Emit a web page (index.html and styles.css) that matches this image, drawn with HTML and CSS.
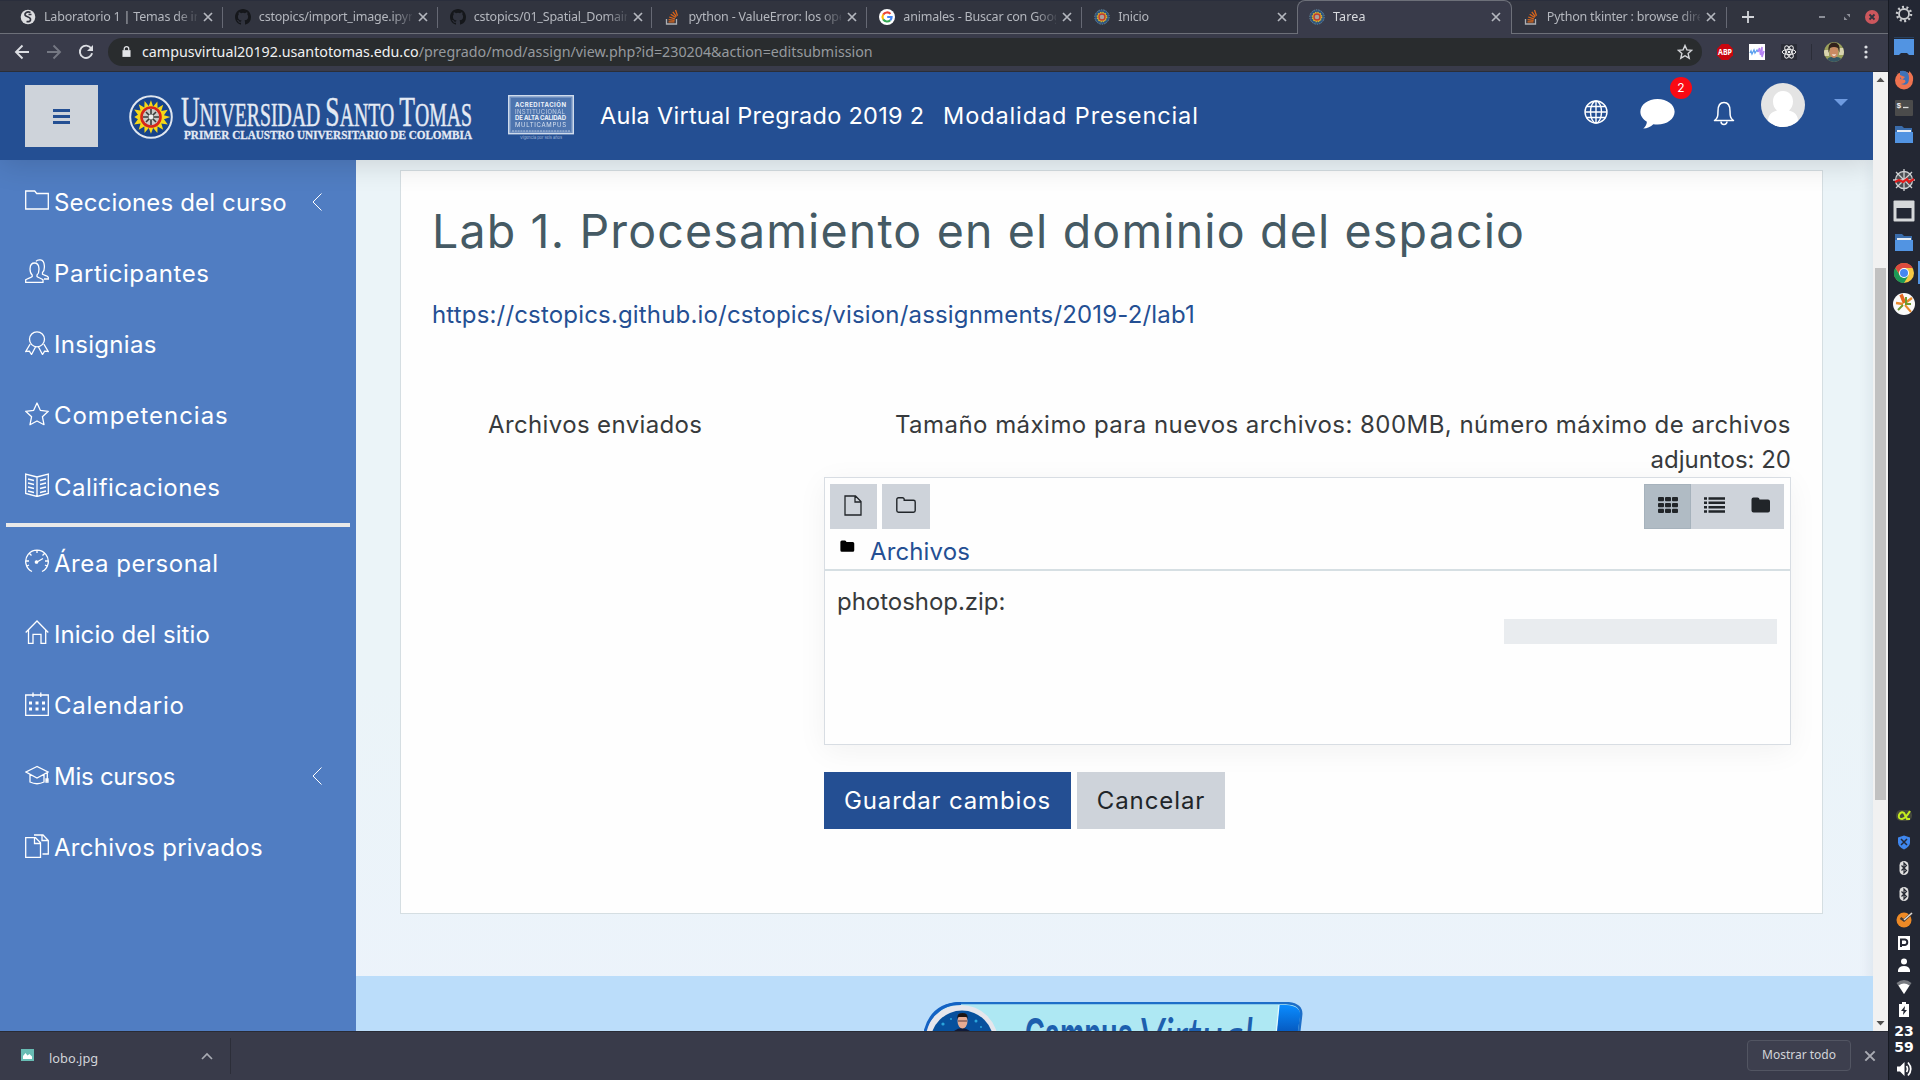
FILE: index.html
```html
<!DOCTYPE html>
<html lang="es">
<head>
<meta charset="utf-8">
<title>Tarea</title>
<link rel="stylesheet" href="styles.css">
</head>
<body>
<svg class="defs" width="0" height="0">
  <defs>
    <symbol id="x" viewBox="0 0 12 12"><path d="M2 2l8 8M10 2l-8 8" fill="none" stroke="currentColor" stroke-width="1.7"/></symbol>
    <symbol id="github" viewBox="0 0 16 16"><path fill="#15171b" d="M8 0C3.58 0 0 3.58 0 8c0 3.54 2.29 6.53 5.47 7.59.4.07.55-.17.55-.38v-1.49c-2.01.37-2.53-.49-2.69-.94-.09-.23-.48-.94-.82-1.13-.28-.15-.68-.52-.01-.53.63-.01 1.08.58 1.23.82.72 1.21 1.87.87 2.33.66.07-.52.28-.87.51-1.07-1.78-.2-3.64-.89-3.64-3.95 0-.87.31-1.59.82-2.15-.08-.2-.36-1.02.08-2.12 0 0 .67-.21 2.2.82a7.4 7.4 0 014 0c1.53-1.04 2.2-.82 2.2-.82.44 1.1.16 1.92.08 2.12.51.56.82 1.27.82 2.15 0 3.07-1.87 3.75-3.65 3.95.29.25.54.73.54 1.48v2.2c0 .21.15.46.55.38A8 8 0 0016 8c0-4.42-3.58-8-8-8z"/></symbol>
    <symbol id="stack" viewBox="0 0 16 16"><path d="M2.5 10v5h10v-5" fill="none" stroke="#aeb0b4" stroke-width="1.3"/><path d="M4.5 12.9h6M4.6 10.6l6 .7M5.2 8l5.7 1.8M6.7 5.2l5 3.3M8.8 2.9l3.6 4.8M11.5 1l2 5.7" fill="none" stroke="#d9661c" stroke-width="1.3"/></symbol>
    <symbol id="sun" viewBox="0 0 44 44"><circle cx="22" cy="22" r="20.8" fill="#17448b" stroke="#dfe6ef" stroke-width="2"/><path fill="#f5d818" d="M22 3l2.500 7 4.800-5.600.2 7.400 6.400-3.700-2.100 7.100 7.300-1.300-4.300 6.100L44 22l-7.200 2.500 4.300 6.100-7.300-1.300 2.100 7.100-6.400-3.700-.2 7.400-4.800-5.600L22 41l-2.500-6.500-4.800 5.600-.2-7.400-6.400 3.700 2.100-7.100-7.300 1.300 4.300-6.100L3 22l4.200-2.500-4.300-6.100 7.300 1.300-2.100-7.100 6.400 3.700.2-7.400 4.800 5.600z" transform="translate(2.600 2.600) scale(.88)"/><circle cx="22" cy="22" r="9.500" fill="#c9c9c6" stroke="#d5261c" stroke-width="2.600"/><path d="M22 14v16M14 22h16M17 17l10 10M27 17L17 27" stroke="#3a3a3a" stroke-width="1.6"/><circle cx="22" cy="22" r="2.4" fill="#eee"/></symbol>
    <symbol id="sunsmall" viewBox="0 0 16 16"><circle cx="8" cy="8" r="7.2" fill="#2c5480" stroke="#668ba2" stroke-width="1" stroke-dasharray="1.5 1"/><circle cx="8" cy="8" r="4.600" fill="#d9b52d" stroke="#d9b52d" stroke-width="1.500" stroke-dasharray="1.200 1.200"/><circle cx="8" cy="8" r="3" fill="#a9a09b" stroke="#c23b2c" stroke-width="1.4"/></symbol>
    <symbol id="bt" viewBox="0 0 20 20"><rect x="5.5" y="3" width="9" height="14" rx="4.5" fill="#dedede"/><path d="M7.5 7.5l5 5-2.5 2.5V5l2.5 2.500-5 5" fill="none" stroke="#252933" stroke-width="1.2"/></symbol>
    <symbol id="pfolder" viewBox="0 0 24 24"><path d="M3 3h7l2 2h8v5H3z" fill="#3a6cab"/><path d="M5 7h14v3H5z" fill="#e8eef5"/><path d="M3 9h18v11H3z" fill="#5294e2"/></symbol>
    <symbol id="folderfill" viewBox="0 0 20 16"><path d="M.5 2.5a2 2 0 012-2h4a2 2 0 012 2h8.500a2 2 0 012 2V13.500a2 2 0 01-2 2h-14.500a2 2 0 01-2-2z" fill="currentColor"/></symbol>
    <symbol id="chev" viewBox="0 0 10 18"><path d="M9.500 .5L1 9l8.500 8.500" fill="none" stroke="#fff" stroke-width="1"/></symbol>
  </defs>
</svg>

<div class="desktop">
  <div class="browser">
    <div class="tabs">
      <div class="tab"><svg viewBox="0 0 16 16"><circle cx="8" cy="8" r="7.300" fill="#dcdde0"/><path d="M10.500 3.500C7 2 4.500 4 5 6s5 1.500 5.500 4-2 3-4 2.500M8.500 5.500h3" fill="none" stroke="#31333e" stroke-width="1.700"/></svg><span>Laboratorio 1 | Temas de in</span><svg class="close"><use href="#x"/></svg></div>
      <div class="tab"><svg><use href="#github"/></svg><span>cstopics/import_image.ipyn</span><svg class="close"><use href="#x"/></svg></div>
      <div class="tab"><svg><use href="#github"/></svg><span>cstopics/01_Spatial_Domain</span><svg class="close"><use href="#x"/></svg></div>
      <div class="tab"><svg><use href="#stack"/></svg><span>python - ValueError: los ope</span><svg class="close"><use href="#x"/></svg></div>
      <div class="tab"><svg viewBox="0 0 16 16"><circle cx="8" cy="8" r="8" fill="#fff"/><g fill="none" stroke-width="2.100"><path d="M11.500 4.900A4.600 4.600 0 004.200 5.600" stroke="#ea4335"/><path d="M4.200 5.600a4.600 4.600 0 000 4.800" stroke="#fbbc05"/><path d="M4.200 10.400a4.600 4.600 0 007.100.8" stroke="#34a853"/><path d="M11.300 11.200A4.600 4.600 0 0012.600 8H8.200" stroke="#4285f4"/></g></svg><span>animales - Buscar con Goog</span><svg class="close"><use href="#x"/></svg></div>
      <div class="tab nosep"><svg><use href="#sunsmall"/></svg><span>Inicio</span><svg class="close"><use href="#x"/></svg></div>
      <div class="tab active"><svg><use href="#sunsmall"/></svg><span>Tarea</span><svg class="close"><use href="#x"/></svg></div>
      <div class="tab last"><svg><use href="#stack"/></svg><span>Python tkinter : browse dire</span><svg class="close"><use href="#x"/></svg></div>
      <svg class="newtab" viewBox="0 0 14 14"><path d="M7 1v12M1 7h12" stroke="#d3d5da" stroke-width="1.800"/></svg>
      <div class="winctl">
        <svg viewBox="0 0 14 14"><path d="M4 7h6" stroke="#8c8f98" stroke-width="2"/></svg>
        <svg viewBox="0 0 14 14"><path d="M6.500 4H10v3.500zM7.500 10H4V6.500z" fill="#8c8f98"/></svg>
        <svg viewBox="0 0 14 14"><circle cx="7" cy="7" r="7" fill="#cc575d"/><path d="M4.500 4.500l5 5M9.500 4.500l-5 5" stroke="#2f343f" stroke-width="1.800"/></svg>
      </div>
    </div>

    <div class="toolbar">
      <svg class="nav" viewBox="0 0 16 16"><path d="M15 8H2M8.500 1.500L2 8l6.500 6.500" fill="none" stroke="#dcdee3" stroke-width="1.900"/></svg>
      <svg class="nav" viewBox="0 0 16 16"><path d="M1 8h13M7.500 1.500L14 8l-6.500 6.500" fill="none" stroke="#757883" stroke-width="1.900"/></svg>
      <svg class="nav" viewBox="0 0 16 16"><path d="M13.200 4.300A6.200 6.200 0 1014.100 9.300" fill="none" stroke="#dcdee3" stroke-width="1.900"/><path d="M15 1v6H9z" fill="#dcdee3"/></svg>
      <div class="omnibox">
        <svg class="lock" viewBox="0 0 10 13"><path d="M1 5h8.500v7.500H.5V5z" fill="#e3e5e8"/><path d="M2.500 5.500V3.500a2.500 2.500 0 015 0v2" fill="none" stroke="#e3e5e8" stroke-width="1.400"/></svg>
        <div class="url"><b>campusvirtual20192.usantotomas.edu.co</b>/pregrado/mod/assign/view.php?id=230204&amp;action=editsubmission</div>
        <svg class="star" viewBox="0 0 16 16"><path d="M8 1.500l1.900 4.400 4.800.4-3.600 3.200 1.100 4.700L8 11.700l-4.200 2.500 1.100-4.700L1.300 6.300l4.800-.4z" fill="none" stroke="#d3d5d8" stroke-width="1.400"/></svg>
      </div>
      <div class="exts">
        <svg viewBox="0 0 16 16"><path d="M4.700 0h6.600L16 4.700v6.600L11.300 16H4.700L0 11.300V4.700z" fill="#c8060e"/><text x="8" y="11" text-anchor="middle" textLength="14" lengthAdjust="spacingAndGlyphs" class="abp">ABP</text></svg>
        <svg viewBox="0 0 16 16"><path fill="#fff" d="M0 0h16v16H0z"/><path d="M1 9l1-2 1 3 2-4 1 3 2-3 1 2" fill="none" stroke="#5aa0ef" stroke-width="1.300"/><path d="M9 8l1.500-4 1 7 1.500-8v10l2-6" fill="none" stroke="#b583f3" stroke-width="1.500"/></svg>
        <svg viewBox="0 0 16 16"><path fill="#2b2d37" d="M0 0h16v16H0z"/><g fill="none" stroke="#eee" stroke-width="1"><ellipse cx="8" cy="8" rx="6.800" ry="2.600"/><ellipse cx="8" cy="8" rx="6.800" ry="2.600" transform="rotate(60 8 8)"/><ellipse cx="8" cy="8" rx="6.800" ry="2.600" transform="rotate(120 8 8)"/></g><circle cx="8" cy="8" r="1.300" fill="#eee"/></svg>
        <i></i>
        <svg class="me" viewBox="0 0 20 20"><clipPath id="mc"><circle cx="10" cy="10" r="10"/></clipPath><g clip-path="url(#mc)"><path fill="#9aa05c" d="M0 0h20v20H0z"/><path d="M0 8h5v6H0zM15 6h5v7h-5z" fill="#d9d4b0"/><path d="M2 20q1-5 6-5h4q6 0 6 5z" fill="#355664"/><ellipse cx="10" cy="10" rx="4.300" ry="6" fill="#c98a63"/><path d="M4.500 11Q3 .5 10 .5T15.500 11l-1.500-5q-4-2-8 0z" fill="#33221b"/><path d="M7.700 12.500h4.600q-2.300 2.400-4.600 0z" fill="#fff"/></g></svg>
        <svg class="dots" viewBox="0 0 16 16"><g fill="#dcdee3"><circle cx="8" cy="3" r="1.600"/><circle cx="8" cy="8" r="1.600"/><circle cx="8" cy="13" r="1.600"/></g></svg>
      </div>
    </div>

    <div class="viewport">
      <div class="page">
        <header class="top">
          <button class="burger"><i></i><i></i><i></i></button>
          <svg class="logo" viewBox="0 0 344 46">
            <use href="#sun" x="0" y="0" width="44" height="44"/>
            <text class="brand" x="52" y="31" textLength="291" lengthAdjust="spacingAndGlyphs"><tspan class="cap">U</tspan>NIVERSIDAD <tspan class="cap">S</tspan>ANTO <tspan class="cap">T</tspan>OMAS</text>
            <text class="motto" x="55" y="43.500" textLength="288" lengthAdjust="spacingAndGlyphs">PRIMER CLAUSTRO UNIVERSITARIO DE COLOMBIA</text>
          </svg>
          <svg class="accred" viewBox="0 0 66 46">
            <rect x=".7" y=".7" width="64.600" height="38" fill="#6f8fc0" stroke="#cfdbec" stroke-width="1.400"/><rect x="3" y="3" width="60" height="33.500" fill="#4d74ae"/>
            <text x="7" y="12" textLength="51" font-weight="700">ACREDITACIÓN</text><text x="7" y="18.500" textLength="50" opacity=".7">INSTITUCIONAL</text><text x="7" y="25" textLength="51" font-weight="700">DE ALTA CALIDAD</text><text x="7" y="32" textLength="51" opacity=".85">MULTICAMPUS</text>
            <path d="M4 36h58" stroke="#b9c9e2" stroke-dasharray="2 .8"/><text class="tiny" x="12" y="43.500" textLength="42">Vigencia por seis años</text>
          </svg>
          <div class="site">Aula Virtual Pregrado 2019 2 &nbsp;<span>Modalidad Presencial</span></div>
          <div class="tools">
            <svg class="globe" viewBox="0 0 24 24"><g fill="none" stroke="#fff" stroke-width="1.400"><circle cx="12" cy="12" r="11"/><ellipse cx="12" cy="12" rx="5.500" ry="11"/><path d="M12 1v22M1 12h22M2.500 6.500h19M2.500 17.500h19"/></g></svg>
            <div class="chat"><svg viewBox="0 0 36 31"><path d="M18 0c9.800 0 17.700 6 17.700 13.500S27.800 27 18 27c-1.500 0-3-.1-4.300-.4C11 29.500 7.500 31 3.300 31c2.500-2 3.700-4.500 3.700-7C2.800 21.500.3 17.700.3 13.500.3 6 8.200 0 18 0z" fill="#fff" transform="scale(1 .98)"/></svg><span>2</span></div>
            <svg class="bell" viewBox="0 0 22 25"><path d="M1.500 19.500h19c-3-2-3.500-4-3.500-9.500 0-5-2-8.500-6-8.500S5 5 5 10c0 5.500-.5 7.500-3.500 9.500z" fill="none" stroke="#fff" stroke-width="1.500" stroke-linejoin="round"/><path d="M8 20.500a3 3 0 006 0" fill="none" stroke="#fff" stroke-width="1.500"/></svg>
            <svg class="avatar" viewBox="0 0 44 44"><clipPath id="ac"><circle cx="22" cy="22" r="22"/></clipPath><g clip-path="url(#ac)"><path fill="#e4e4e4" d="M0 0h44v44H0z"/><path d="M22 8c6 0 10 4.500 10 10.500 0 4-1.500 7-4 9 6 1.500 9 5 9 10.500V44H7v-6c0-5.500 3-9 9-10.500-2.500-2-4-5-4-9C12 12.500 16 8 22 8z" fill="#fff"/></g></svg>
            <svg class="caret" viewBox="0 0 14 7"><path d="M0 0h14L7 7z" fill="#6f9be0"/></svg>
          </div>
        </header>
        <div class="below">
          <nav class="side">
            <a class="n1"><svg viewBox="0 0 24 24"><path d="M.7 21V3h9l2 2.500h11.600V21z"/></svg>Secciones del curso<svg class="chev"><use href="#chev"/></svg></a>
            <a class="n2"><svg viewBox="0 0 24 24"><path d="M.7 23.300v-2.500c2.500-1.600 5-2 6.500-3.300V16C4.500 14 3.500 4 9.500 4S14.500 14 12 16v1.500c1.500 1.300 4 1.700 6 3.300v2.500zM11 2.300C12 1 14 .7 15.500.9c5 .6 4.600 10.600 2 12.600v1.800c2 1.200 5 1.500 5.800 3V20H19"/></svg>Participantes</a>
            <a class="n3"><svg viewBox="0 0 24 24"><circle cx="12" cy="8.300" r="7.500"/><path d="M5.200 13L.8 20.500l3.600-.3L6.500 23.500l4-7.500M18.800 13l4.400 7.500-3.600-.3-2.100 3.300-4-7.500"/></svg>Insignias</a>
            <a class="n4"><svg viewBox="0 0 24 24"><path d="M12 1l3.300 7.300 8 1-5.900 5.400 1.600 8L12 19l-7 3.700 1.600-8L.7 9.300l8-1z" stroke-linejoin="round"/></svg>Competencias</a>
            <a class="n5"><svg viewBox="0 0 24 24"><path d="M12 4L.7 1v19.500L12 23.500l11.300-3V1zv19.500M3 6l6 1.500M3 10l6 1.500M3 14l6 1.500M3 18l6 1.500M21 6l-6 1.500M21 10l-6 1.500M21 14l-6 1.500M21 18l-6 1.500"/></svg>Calificaciones</a>
            <hr>
            <a class="n6"><svg viewBox="0 0 24 24"><path d="M7 22.500a11.300 11.300 0 1110 0M12 1v3M1 12h3M20 12h3M4.500 4.500l2 2M19.500 4.500l-2 2M2 17l2-1M22 17l-2-1M12 13l6-3.500" /><circle cx="11.500" cy="13" r="1.200" fill="#fff"/></svg>Área personal</a>
            <a class="n7"><svg viewBox="0 0 24 24"><path d="M.7 12.500L12 1l11.300 11.500M3.500 10v13.300H8v-9h8v9h4.700V10"/></svg>Inicio del sitio</a>
            <a class="n8"><svg viewBox="0 0 24 24"><path d="M.7 3h22.600v20.300H.7zM8 .5V5M15.800.5V5"/><path d="M4 11h3M10.500 11h3M17 11h3M4 17h3M10.500 17h3M17 17h3" stroke-width="2.800"/></svg>Calendario</a>
            <a class="n9"><svg viewBox="0 0 24 24"><path d="M12 3.500L1 9l11 6 11-6zM5 11.500V19q7 3.500 14 0v-7.500M22.300 9.500V18M21 16v3h2v-3z"/></svg>Mis cursos<svg class="chev"><use href="#chev"/></svg></a>
            <a class="n10"><svg viewBox="0 0 24 24"><path d="M.7 3.700h9.800l5 5v14.600H.7zM9.500 4v5.500H15M9 1h9l5.300 5.500V20H17.500M17 1v5.500h6"/></svg>Archivos privados</a>
          </nav>
          <main>
            <section class="card">
              <h1>Lab 1. Procesamiento en el dominio del espacio</h1>
              <a class="link">https://cstopics.github.io/cstopics/vision/assignments/2019-2/lab1</a>
              <div class="row">
                <label>Archivos enviados</label>
                <div class="field">
                  <p class="limit"><span class="l1">Tamaño máximo para nuevos archivos: 800MB, número máximo de archivos</span><br><span class="l2">adjuntos: 20</span></p>
                  <div class="fm">
                    <div class="fmtop">
                      <div class="fmbar">
                        <button><svg width="18" height="21" viewBox="0 0 18 21"><path d="M1 1h10.500L17 6.500V20H1zM11 1v6h6" fill="none" stroke="#212529" stroke-width="1.300"/></svg></button>
                        <button class="mk"><svg width="20" height="16" viewBox="0 0 20 16"><path d="M.8 2.500A1.700 1.700 0 012.500.8h4a1.700 1.700 0 011.700 1.700v.7h9.300a1.700 1.700 0 011.700 1.700v8.600a1.700 1.700 0 01-1.700 1.700h-15a1.700 1.700 0 01-1.700-1.700z" fill="none" stroke="#212529" stroke-width="1.400"/></svg></button>
                        <div class="views">
                          <button class="on"><svg width="20" height="16" viewBox="0 0 20 16"><g fill="#212529"><rect width="6" height="4.300" rx="1"/><rect x="7" width="6" height="4.300" rx="1"/><rect x="14" width="6" height="4.300" rx="1"/><rect y="5.900" width="6" height="4.300" rx="1"/><rect x="7" y="5.900" width="6" height="4.300" rx="1"/><rect x="14" y="5.900" width="6" height="4.300" rx="1"/><rect y="11.700" width="6" height="4.300" rx="1"/><rect x="7" y="11.700" width="6" height="4.300" rx="1"/><rect x="14" y="11.700" width="6" height="4.300" rx="1"/></g></svg></button>
                          <button><svg width="21" height="16" viewBox="0 0 21 16"><path d="M0 1.500h3M0 5.800h3M0 10.200h3M0 14.500h3M4.500 1.500H21M4.500 5.800H21M4.500 10.200H21M4.500 14.500H21" stroke="#212529" stroke-width="2.600"/></svg></button>
                          <button><svg width="20" height="16" color="#212529"><use href="#folderfill"/></svg></button>
                        </div>
                      </div>
                      <div class="path"><svg width="15" height="12"><use href="#folderfill"/></svg><a>Archivos</a></div>
                    </div>
                    <div class="fmbody"><span class="fname">photoshop.zip:</span><div class="progress"></div></div>
                  </div>
                  <div class="actions"><button class="save">Guardar cambios</button><button class="cancel">Cancelar</button></div>
                </div>
              </div>
            </section>
            <footer>
              <svg width="380" height="29" viewBox="0 0 380 29">
                <defs><linearGradient id="bl" x2="0" y2="1"><stop offset="0" stop-color="#0a8cff"/><stop offset="1" stop-color="#0550b4"/></linearGradient></defs>
                <path d="M1 40Q6 1 38 1H362Q379 2 377 14L374 40z" fill="#aee8f3" stroke="#1d6ec8" stroke-width="2.500"/>
                <path d="M355 3h7q16 1 14 12l-3 20h-21z" fill="url(#bl)"/><path d="M355 3l-3 30" stroke="#e6fbff" stroke-width="1.200"/>
                <circle cx="37" cy="40" r="37" fill="#e6e6ec"/><path d="M.5 32Q7 1.500 37 1.500" fill="none" stroke="#1462c4" stroke-width="3"/><circle cx="38" cy="40" r="31.500" fill="#07509d"/>
                <g fill="#2aa5dc"><circle cx="19" cy="22" r="1.600"/><circle cx="52" cy="19" r="1.500"/><circle cx="57" cy="25" r="1"/><circle cx="27" cy="17" r="1"/></g>
                <path d="M30 29q8-6 16 0z" fill="#101b39"/><ellipse cx="38.500" cy="19" rx="5" ry="7.500" fill="#e6ab93"/><path d="M33.500 17q-1-6 5-6t5 6l-1-2h-8z" fill="#1c1515"/><path d="M34 19h9" stroke="#5a3b3a"/>
                <text class="campus" x="101" y="48" textLength="108" lengthAdjust="spacingAndGlyphs">Campus</text>
                <text class="virtual" x="215" y="51" textLength="114" lengthAdjust="spacingAndGlyphs">Virtual</text>
              </svg>
            </footer>
          </main>
        </div>
      </div>
      <div class="scroll"><svg viewBox="0 0 15 15"><path d="M3.500 10h8l-4-4.500z" fill="#505050"/></svg><i></i><svg viewBox="0 0 15 15"><path d="M3.500 5h8l-4 4.500z" fill="#505050"/></svg></div>
    </div>

    <div class="shelf">
      <svg class="pic" viewBox="0 0 13 12"><path fill="#68bcb4" d="M0 0h13v12H0z"/><path d="M2 10V7l2.500-3 2 2.500L8.500 5 11 7.500V10z" fill="#fff"/></svg>
      <span class="file">lobo.jpg</span>
      <svg class="up" viewBox="0 0 12 8"><path d="M1 7l5-5 5 5" fill="none" stroke="#a9abb3" stroke-width="1.700"/></svg>
      <i></i>
      <button>Mostrar todo</button>
      <svg class="shx"><use href="#x"/></svg>
    </div>
  </div>

  <aside class="panel">
    <svg style="margin-top:2px" viewBox="0 0 24 24"><circle cx="12" cy="12" r="5" fill="none" stroke="#c9cbce" stroke-width="1.800"/><circle cx="12" cy="12" r="7" fill="none" stroke="#c9cbce" stroke-width="2.500" stroke-dasharray="2 2.400"/></svg>
    <svg style="margin-top:9px" viewBox="0 0 24 24"><path d="M2 4h20v16h-5l-2-2H9l-2 2H2z" fill="#5294e2"/><path d="M2 2.500h20" stroke="#27405f"/></svg>
    <svg style="margin-top:9px" viewBox="0 0 24 24"><circle cx="12" cy="12.500" r="9" fill="#ee7350"/><path d="M8 3q9-2 9 7t-8 6q6-1 4-4l-5-1z" fill="#3f72b8"/><path d="M5 4l3 3 5 2-3 3z" fill="#ee7350"/><path d="M17 3q5 4 4 10l-4-2z" fill="#ee7350"/></svg>
    <svg style="margin-top:4px" viewBox="0 0 24 24"><rect x="3" y="4" width="18" height="16" rx="1" fill="#4b4b4b"/><text x="4.500" y="11.500" class="prompt">$</text><path d="M11 11.500h5.500" stroke="#ddd" stroke-width="1.300"/></svg>
    <svg style="margin-top:3px"><use href="#pfolder"/></svg>
    <svg style="margin-top:21px" viewBox="0 0 24 24"><circle cx="12" cy="12" r="8" fill="#4a4d52"/><g fill="none" stroke="#ced0d2" stroke-width="1.300"><circle cx="12" cy="12" r="8.500"/><path d="M12 1v22M1 12h22M4 4l16 16M20 4L4 20"/></g><path d="M3 14l4-2 4 2 4-3 2 3 5-3" fill="none" stroke="#e01b1b" stroke-width="2.200"/></svg>
    <svg style="margin-top:7px" viewBox="0 0 24 24"><rect x="1.500" y="1.500" width="21" height="21" rx="1" fill="#d6d8da"/><rect x="4.500" y="9" width="15" height="10.500" fill="#232734"/></svg>
    <svg style="margin-top:8px"><use href="#pfolder"/></svg>
    <svg style="margin-top:6px" viewBox="0 0 24 24"><circle cx="12" cy="12" r="10" fill="#f7c843"/><path d="M3.300 7A10 10 0 0120.700 7H12L8 14z" fill="#dd4b3e"/><path d="M3.300 7A10 10 0 0012 22l4.500-7.500H8z" fill="#1c9a57"/><circle cx="12" cy="12" r="5" fill="#fff"/><circle cx="12" cy="12" r="4" fill="#4587f1"/></svg>
    <svg style="margin-top:7px" viewBox="0 0 24 24"><circle cx="12" cy="12" r="11" fill="#fafafa"/><path d="M12.500 11L9 2.500" stroke="#e5661f" stroke-width="3.500"/><path d="M13 11l7-5M4 11l7 1" stroke="#e98a2c" stroke-width="2.400"/><path d="M13 13l6 7" stroke="#e98a2c" stroke-width="2"/><path d="M11 13l-5 5M14 11V5M13 12h6" stroke="#6f9a2f" stroke-width="2"/></svg>
    <div class="gap"></div>
    <svg class="s" viewBox="0 0 20 20"><rect x="2" y="5" width="16" height="11" rx="5" fill="#45493d"/><path d="M16 6q-4 7-8 8-4 0-3-4 2-4 5-2l3 6h3" fill="none" stroke="#c6ec20" stroke-width="2"/></svg>
    <svg class="s" style="margin-top:7px" viewBox="0 0 20 20"><path d="M10 3.500l6 2v5q0 4-6 7-6-3-6-7v-5z" fill="#3f87ef"/><path d="M7 7l6 6M13 7l-6 6" stroke="#232a3b" stroke-width="1.500"/></svg>
    <svg class="s" style="margin-top:6px"><use href="#bt"/></svg>
    <svg class="s" style="margin-top:6px"><use href="#bt"/></svg>
    <svg class="s" style="margin-top:5px" viewBox="0 0 20 20"><circle cx="10" cy="11" r="7.500" fill="#ee8a26"/><path d="M6.500 9l3.500 2.500L18 4" fill="none" stroke="#443a33" stroke-width="2.500"/><path d="M10 11l8-7" stroke="#ddd" stroke-width="1.500"/></svg>
    <svg class="s" style="margin-top:4px" viewBox="0 0 20 20"><path fill="#fff" d="M4 3h12v14H4z"/><path d="M7 14V6.500h4a2.800 2.800 0 010 5.500H7.500" fill="none" stroke="#232733" stroke-width="2"/></svg>
    <svg class="s" style="margin-top:2px" viewBox="0 0 20 20"><circle cx="10" cy="6.500" r="3" fill="#fff"/><path d="M4 17v-2q1-4 6-4t6 4v2z" fill="#fff"/></svg>
    <svg class="s" style="margin-top:2px" viewBox="0 0 20 20"><path d="M2.500 6q7.500-6 15 0L10 17z" fill="#777a80"/><path d="M4.500 8.500q5.500-4 11 0L10 17z" fill="#fff"/></svg>
    <svg class="s" style="margin-top:2px" viewBox="0 0 20 20"><path d="M8 3h4v2h3v13H5V5h3z" fill="#fff"/><path d="M11 7l-4 5h2.500L9 16l4-5h-2.500z" fill="#232733"/></svg>
    <div class="clock">23<br>59</div>
    <svg class="s" viewBox="0 0 20 20"><path d="M3 7.500h3L10.500 3v14L6 12.500H3z" fill="#fff"/><path d="M12.500 7q2 3 0 6M14 3.500q5.500 6.500 0 13" fill="none" stroke="#fff" stroke-width="1.700"/></svg>
  </aside>
</div>
</body>
</html>
```
FILE: styles.css
```css
* { box-sizing: border-box; }
body { margin: 0; width: 1920px; height: 1080px; overflow: hidden; font-family: Inter, "Open Sans", sans-serif; }
svg { display: block; flex: none; }
.defs { position: absolute; }
button { border: 0; margin: 0; padding: 0; font: inherit; color: inherit; display: flex; align-items: center; justify-content: center; }
.desktop { display: flex; height: 1080px; background: #232733; }
.browser { width: 1888px; display: flex; flex-direction: column; }

/* tab strip */
.tabs { height: 34px; flex: none; background: #31343f; border-bottom: 1px solid #6d7079; border-top: 1px solid #2a2e3c; padding-left: 8px; display: flex; font: 12.500px/32px "Noto Sans", sans-serif; color: #b4b7be; }
.tab { width: 214.830px; height: 34px; flex: none; display: flex; align-items: center; padding: 0 0 2px 12px; position: relative; }
.tab > svg { width: 16px; height: 16px; }
.tab > span { width: 153px; margin-left: 8px; overflow: hidden; white-space: nowrap; letter-spacing: -.2px; -webkit-mask-image: linear-gradient(90deg, #000 132px, rgba(0,0,0,.15) 153px); mask-image: linear-gradient(90deg, #000 132px, rgba(0,0,0,.15) 153px); }
.tab > .close { width: 12px; height: 12px; margin-left: 5px; color: #b4b7be; }
.tab::after { content: ""; position: absolute; right: 0; top: 6px; width: 1px; height: 21px; background: #666974; }
.tab.nosep::after, .tab.active::after { display: none; }
.tab.active { background: #393b4a; border: 1px solid #6d7079; border-bottom: 0; border-radius: 8px 8px 0 0; margin-top: -1px; padding: 0 0 1px 11px; color: #d8dade; }
.tab.active > span { letter-spacing: .15px; }
.tab.active > .close { margin-left: 4px; }
.tab.last { padding-left: 11px; }
.newtab { width: 14px; height: 14px; margin: 9px 0 0 14px; }
.winctl { margin: 9px 9px 0 auto; display: flex; gap: 11px; }
.winctl svg { width: 14px; height: 14px; }

/* address bar */
.toolbar { height: 38px; flex: none; background: #393b4a; border-bottom: 1px solid #2b2e37; display: flex; align-items: center; padding: 0 0 2px 14px; }
.nav { width: 16px; height: 16px; margin-right: 16px; }
.omnibox { width: 1594px; height: 28px; margin-left: -2px; border-radius: 14px; background: #292c2e; display: flex; align-items: center; }
.lock { width: 9px; height: 13px; margin-left: 14px; }
.url { margin-left: 11px; font: 14.27px/28px "Noto Sans", sans-serif; color: #969a9e; white-space: nowrap; }
.url b { font-weight: 400; color: #f0f1f2; }
.star { width: 16px; height: 16px; margin: 0 9px 0 auto; }
.exts { display: flex; align-items: center; margin-left: 15px; }
.exts svg { width: 16px; height: 16px; margin-right: 16px; }
.exts i { width: 1px; height: 16px; background: #2b2d38; margin: 0 12px 0 -2px; }
.exts svg.me { width: 20px; height: 20px; margin-right: 14px; }
.exts svg.dots { margin: 0; }
.abp { font: 700 8.500px "Noto Sans", sans-serif; fill: #fff; }

/* page viewport */
.viewport { height: 959px; flex: none; display: flex; overflow: hidden; }
.page { width: 1873px; height: 959px; overflow: hidden; }
.top { height: 88px; background: #244f93; display: flex; align-items: flex-start; padding-left: 25px; box-shadow: 0 4px 28px rgba(0,0,0,.14); position: relative; z-index: 1; }
.burger { width: 73px; height: 62px; margin-top: 13px; padding-top: 1px; background: #ced3da; flex-direction: column; gap: 3px; flex: none; }
.burger i { width: 17px; height: 3px; background: #244f93; }
.logo { width: 344px; height: 46px; margin: 23px 0 0 31px; overflow: visible; }
.brand { font: 33px "Liberation Serif", serif; fill: #e4eaf4; stroke: #e4eaf4; stroke-width: .5px; }
.brand .cap { font-size: 43px; }
.motto { font: 700 12.500px "Liberation Serif", serif; fill: #e4eaf4; stroke: #e4eaf4; stroke-width: .3px; }
.accred { width: 66px; height: 46px; margin: 23px 0 0 35px; }
.accred text { font-family: Inter, sans-serif; font-size: 6px; fill: #eef3fa; }
.accred .tiny { font-size: 4px; fill: #a9bcda; }
.site { margin: 26px 0 0 26px; font-size: 23.500px; line-height: 36px; letter-spacing: .27px; color: #fff; white-space: nowrap; }
.site span { margin-left: 5px; letter-spacing: .88px; }
.tools { margin-left: auto; display: flex; align-items: flex-start; padding-right: 25px; }
.globe { width: 24px; height: 24px; margin-top: 28px; }
.chat { position: relative; margin: 27px 0 0 32px; }
.chat svg { width: 35px; height: 30px; }
.chat span { position: absolute; left: 30px; top: -22px; width: 22px; height: 22px; border-radius: 50%; background: #fa0a14; color: #fff; font-size: 12px; line-height: 22px; text-align: center; }
.bell { width: 22px; height: 25px; margin: 29px 0 0 38px; }
.avatar { width: 44px; height: 44px; margin: 11px 0 0 26px; }
.caret { width: 14px; height: 7px; margin: 27px 0 0 29px; }
.below { display: flex; height: 871px; }

/* side navigation */
.side { width: 356px; flex: none; background: #507dc2; padding-top: 6.400px; font-size: 24px; line-height: 36px; color: #fff; }
.side a { height: 71.200px; padding: 1.600px 34px 0 25px; display: flex; align-items: center; white-space: nowrap; }
.side a > svg:first-child { width: 24px; height: 24px; margin: 0 5px 5px 0; fill: none; stroke: #fff; stroke-width: 1.300px; }
.side .chev { width: 10px; height: 18px; margin: 0 0 2px auto; }
.side hr { margin: .6px 6px .4px; height: 4px; border: 0; background: #e9e9e9; }
.n1 { letter-spacing: .16px; } .n2 { letter-spacing: .56px; } .n3 { letter-spacing: .3px; }
.n4 { letter-spacing: .97px; } .n5 { letter-spacing: .5px; } .n6 { letter-spacing: .52px; }
.n7 { letter-spacing: .06px; } .n8 { letter-spacing: .8px; } .n9 { letter-spacing: -.25px; } .n10 { letter-spacing: .27px; }

/* main column */
main { flex: 1; min-width: 0; background: linear-gradient(#ebf4f8 60%, #ecf3fb); display: flex; flex-direction: column; box-shadow: inset -14px 0 14px -12px rgba(0,40,60,.08); }
.card { width: 1423px; height: 744px; margin: 10px 0 0 44px; flex: none; background: #fefefe; border: 1px solid #d5dee2; padding: 32px 31px 0; font-size: 24px; line-height: 36px; color: #373a3c; }
h1 { margin: 0 0 38px; font-size: 46.500px; line-height: 56px; font-weight: 400; letter-spacing: 1.160px; color: #455a64; white-space: nowrap; }
.link { display: block; color: #244f93; letter-spacing: .17px; }
.row { display: flex; margin-top: 74px; }
.row label { width: 392px; flex: none; padding-left: 56px; letter-spacing: .37px; }
.field { flex: 1; }
.limit { margin: 0; text-align: right; line-height: 35px; white-space: nowrap; }
.l1 { letter-spacing: .46px; }
.fm { width: 967px; height: 268px; border: 1px solid #d8dde3; background: #fefefe; box-shadow: 0 6px 28px rgba(0,0,0,.05); }
.fmtop { height: 93px; border-bottom: 2px solid #d6dfe3; padding: 6px 6px 0 5px; }
.fmbar { display: flex; gap: 5px; }
.fmbar button { width: 46.600px; height: 45px; background: #ced3da; padding-bottom: 3px; }
.fmbar button.mk { width: 48px; }
.views { display: flex; margin-left: auto; }
.views button.on { background: #b0bbc4; border: 1px solid #a6b2bc; }
.path { display: flex; padding-left: 10px; margin-top: 3px; color: #000; line-height: 36px; }
.path svg { margin-top: 8px; }
.path a { margin-left: 15px; margin-top: 2px; color: #244f93; letter-spacing: .13px; }
.fmbody { padding: 13px 13px 0 12px; }
.fname { letter-spacing: -.03px; display: block; height: 35px; }
.progress { width: 273px; height: 25px; background: #e9ecef; margin-left: auto; }
.actions { display: flex; gap: 6px; margin-top: 27px; }
.actions button { height: 57px; padding-top: 1px; }
.save { width: 247px; background: #244f93; letter-spacing: .85px; }
.actions .save { color: #fff; }
.cancel { width: 148px; background: #ced3da; letter-spacing: .9px; }
.actions .cancel { color: #212529; }
footer { margin-top: auto; height: 55px; background: #bbddfa; padding: 26px 0 0 568px; flex: none; }
.campus { font: 700 47px "Liberation Sans Narrow", "Liberation Sans", sans-serif; fill: #1d5fae; }
.virtual { font: italic 400 48px Lato, sans-serif; fill: #1d5fae; }

.scroll { width: 15px; background: #f1f1f1; display: flex; flex-direction: column; align-items: center; }
.scroll svg { width: 15px; height: 15px; }
.scroll i { width: 11px; height: 532px; margin: 181px 0 auto; background: #c1c1c1; }

/* download shelf */
.shelf { height: 49px; background: #393b4a; border-top: 1px solid #292b35; display: flex; align-items: center; padding: 0 11px 0 21px; font: 12.800px/18px "Noto Sans", sans-serif; color: #d2d4d9; }
.pic { width: 13px; height: 12px; margin-bottom: 2px; }
.file { margin: 4px 0 0 15px; width: 153px; }
.up { width: 12px; height: 8px; margin-left: -1px; }
.shelf i { width: 1px; height: 36px; background: #2c2e39; margin-left: 17px; }
.shelf button { width: 104px; height: 31px; margin: 0 0 2px auto; border: 1px solid #525562; border-radius: 4px; font-size: 12px; color: #d2d4d9; background: #3d3f4e; }
.shelf .shx { width: 14px; height: 14px; margin: 0 0 1px 12px; color: #a9abb3; }

/* desktop panel */
.panel { width: 32px; padding-right: 1px; border-left: 1px solid #171a23; display: flex; flex-direction: column; align-items: center; background: linear-gradient(#5294e2, #5294e2) 29px 261px / 2px 23px no-repeat #232733; }
.panel svg { width: 24px; height: 24px; }
.panel svg.s { width: 20px; height: 20px; }
.gap { height: 489px; flex: none; }
.prompt { font: 700 8px "Liberation Mono", monospace; fill: #eee; }
.clock { margin: 4px 0; font: 700 14px/16px "DejaVu Sans", sans-serif; color: #fff; }
```
